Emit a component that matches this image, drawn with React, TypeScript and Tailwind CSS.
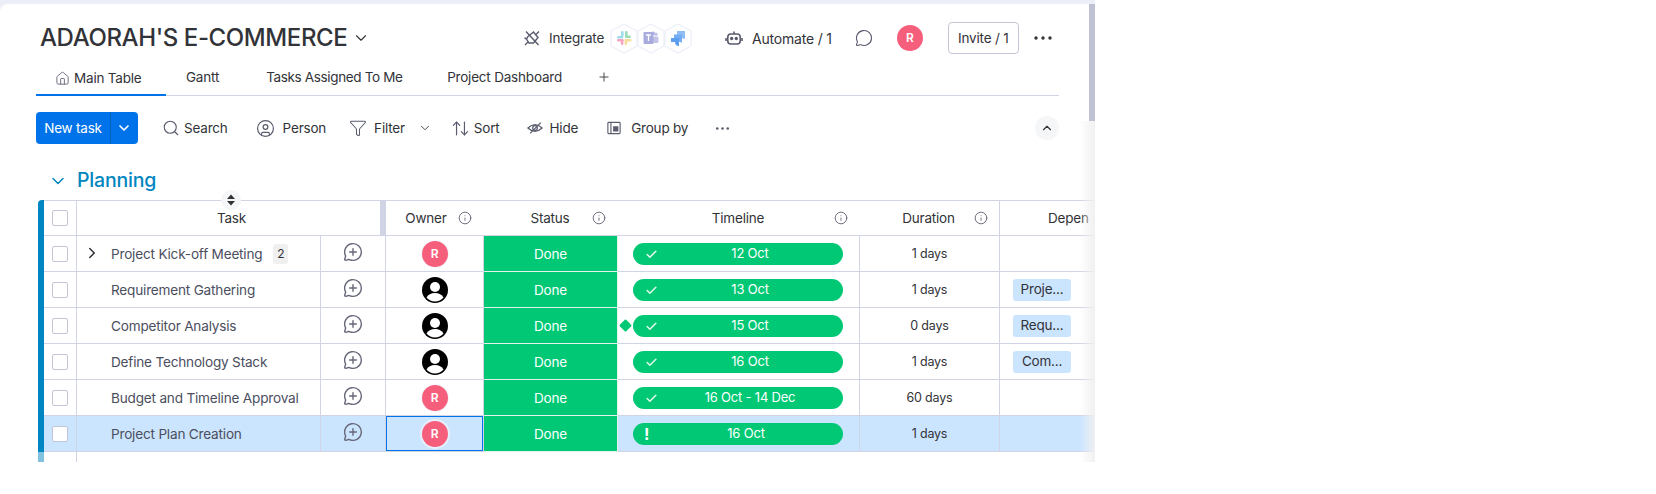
import {
  ArrowUpDown,
  Check,
  ChevronDown,
  ChevronRight,
  ChevronUp,
  CircleUser,
  Funnel,
  House,
  Info,
  MessageCircle,
  MessageCirclePlus,
  Plus,
  Search,
} from 'lucide-react';
import type { ReactNode } from 'react';

type Task = {
  name: string;
  owner: 'initial' | 'blank';
  timeline: string;
  duration: string;
  dependency?: string;
  subitems?: number;
  milestone?: boolean;
  selected?: boolean;
};

const tasks: Task[] = [
  { name: 'Project Kick-off Meeting', owner: 'initial', timeline: '12 Oct', duration: '1 days', subitems: 2 },
  { name: 'Requirement Gathering', owner: 'blank', timeline: '13 Oct', duration: '1 days', dependency: 'Proje...' },
  { name: 'Competitor Analysis', owner: 'blank', timeline: '15 Oct', duration: '0 days', dependency: 'Requ...', milestone: true },
  { name: 'Define Technology Stack', owner: 'blank', timeline: '16 Oct', duration: '1 days', dependency: 'Com...' },
  { name: 'Budget and Timeline Approval', owner: 'initial', timeline: '16 Oct - 14 Dec', duration: '60 days' },
  { name: 'Project Plan Creation', owner: 'initial', timeline: '16 Oct', duration: '1 days', selected: true },
];

function Dots({ className }: { className: string }) {
  return (
    <svg viewBox="0 0 18 4" className={className} fill="currentColor">
      <circle cx="2" cy="2" r="1.7" />
      <circle cx="9" cy="2" r="1.7" />
      <circle cx="16" cy="2" r="1.7" />
    </svg>
  );
}

function Hexagon({ children }: { children: ReactNode }) {
  return (
    <div className="relative -mr-[1px] h-[31px] w-[28px]">
      <svg viewBox="0 0 28 31" className="absolute inset-0 h-full w-full" fill="#fff" stroke="#eceff8" strokeWidth="1.2">
        <path d="M14 1 L27 8 V23 L14 30 L1 23 V8 Z" />
      </svg>
      <svg viewBox="0 0 16 16" className="absolute left-[6px] top-[7.5px] h-4 w-4">
        {children}
      </svg>
    </div>
  );
}

function IntegrationLogos() {
  return (
    <div className="ml-[6px] flex items-center">
      <Hexagon>
        <rect x="1" y="6" width="6" height="2.6" rx="1.3" fill="#9fdcef" />
        <rect x="5" y="1" width="2.6" height="6" rx="1.3" fill="#9fdcef" />
        <rect x="9" y="1" width="2.6" height="6.5" rx="1.3" fill="#9ddcb8" />
        <rect x="9" y="5.5" width="6" height="2.6" rx="1.3" fill="#9ddcb8" />
        <rect x="9" y="9" width="6.5" height="2.6" rx="1.3" fill="#f7dc9b" />
        <rect x="8.6" y="9" width="2.6" height="6" rx="1.3" fill="#f7dc9b" />
        <rect x="1" y="9" width="6.5" height="2.6" rx="1.3" fill="#f3a6bd" />
        <rect x="4.8" y="9" width="2.6" height="6" rx="1.3" fill="#f3a6bd" />
      </Hexagon>
      <Hexagon>
        <circle cx="13" cy="4.2" r="1.7" fill="#c3c3e8" />
        <circle cx="10" cy="3.5" r="2" fill="#b5b6e4" />
        <rect x="10" y="6.5" width="5.5" height="6.5" rx="1.5" fill="#c3c3e8" />
        <rect x="0.5" y="2" width="10" height="12" rx="1" fill="#a9abdf" />
        <path d="M3 5 H8 M5.5 5 V11" stroke="#fff" strokeWidth="1.3" fill="none" />
      </Hexagon>
      <Hexagon>
        <path d="M7 1 H15 V9 Q11 9 11 5 H7 Z" fill="#8fbdf5" />
        <path d="M4 4.5 H12 V12.5 Q8 12.5 8 8.5 H4 Z" fill="#74adf3" />
        <path d="M1 8 H9 V16 Q5 16 5 12 H1 Z" fill="#5c9ef0" />
      </Hexagon>
    </div>
  );
}

function ToolbarItem({ icon, label, className }: { icon: ReactNode; label: string; className: string }) {
  return (
    <div className={`flex w-fit items-center text-[13.5px] text-[#323338] ${className}`}>
      {icon}
      <span>{label}</span>
    </div>
  );
}

function HeaderLabel({ label, width, iconLeft }: { label: string; width: string; iconLeft: string }) {
  return (
    <div className={`relative flex h-full shrink-0 items-center justify-center ${width}`}>
      <span>{label}</span>
      <Info className={`absolute top-[10px] h-[14px] w-[14px] text-[#676879] ${iconLeft}`} strokeWidth={1.6} />
    </div>
  );
}

function Avatar({ owner, selected }: { owner: Task['owner']; selected?: boolean }) {
  if (owner === 'blank') {
    return (
      <svg viewBox="0 0 26 26" className="h-[26px] w-[26px]">
        <circle cx="13" cy="13" r="13" fill="#000" />
        <circle cx="13" cy="10" r="5" fill="#fff" />
        <path d="M4.5 20.5 Q7 16 13 16 Q19 16 21.5 20.5 Q18 24.4 13 24.4 Q8 24.4 4.5 20.5 Z" fill="#fff" />
      </svg>
    );
  }

  return (
    <div
      className={`flex h-[26px] w-[26px] items-center justify-center rounded-full bg-[#f65f7c] text-[12px] font-semibold text-white ${
        selected ? 'shadow-[0_0_0_2px_#e6f1fd]' : 'shadow-[0_0_0_1px_#f5f6f8]'
      }`}
    >
      R
    </div>
  );
}

function TaskRow({ task }: { task: Task }) {
  const lineClass = 'h-full shrink-0 border-b border-r border-[#d0d4e4]';

  return (
    <div className={`flex h-9 ${task.selected ? 'bg-[#cce5ff]' : 'bg-white'}`}>
      <div className={`${lineClass} flex w-[33px] items-center pl-[8px]`}>
        <div className="h-4 w-4 rounded-[2px] border border-[#c3c6d4] bg-white" />
      </div>
      <div className={`${lineClass} relative flex w-[244px] items-center pl-[34px] text-[13.6px] text-[#4b4e5e]`}>
        {task.subitems ? (
          <ChevronRight className="absolute left-[6px] top-[8px] h-[18px] w-[18px] text-[#323338]" strokeWidth={2} />
        ) : null}
        <span className="pt-[1px]">{task.name}</span>
        {task.subitems ? (
          <span className="ml-[11px] flex h-5 w-[15px] items-center justify-center rounded-[3px] bg-[#f0f0f0] text-[12px] text-[#323338]">
            {task.subitems}
          </span>
        ) : null}
      </div>
      <div className={`${lineClass} flex w-[65px] items-center justify-center pb-[3px]`}>
        <MessageCirclePlus className="h-[20px] w-[20px] text-[#676879]" strokeWidth={1.7} />
      </div>
      <div className={`${lineClass} flex w-[98px] items-center justify-center`}>
        {task.selected ? (
          <div className="flex h-[35px] w-[97px] items-center justify-center border border-[#0073ea]">
            <Avatar owner={task.owner} selected />
          </div>
        ) : (
          <Avatar owner={task.owner} />
        )}
      </div>
      <div className="flex h-full w-[134px] shrink-0 items-center justify-center border-b border-r border-[#e1f3ea] bg-[#00c875] pt-[1px] text-[13.5px] text-white">
        Done
      </div>
      <div className={`${lineClass} relative flex w-[242px] items-center pl-[15px]`}>
        {task.milestone ? (
          <div className="absolute left-[3px] top-[13px] h-[9px] w-[9px] rotate-45 rounded-[1px] bg-[#00c875]" />
        ) : null}
        <div className="relative flex h-[22px] w-[210px] items-center justify-center rounded-full bg-[#00c875] text-[13px] text-white">
          {task.selected ? (
            <span className="absolute left-[11px] top-[-1px] text-[16px] font-bold">!</span>
          ) : (
            <Check className="absolute left-[12px] top-[5px] h-[13px] w-[13px] text-[#dff7ea]" strokeWidth={3} />
          )}
          <span className={task.selected ? 'pl-[16px]' : 'pl-[24px]'}>{task.timeline}</span>
        </div>
      </div>
      <div className={`${lineClass} flex w-[140px] items-center justify-center pt-[1px] text-[12.5px] text-[#323338]`}>
        {task.duration}
      </div>
      <div className="flex h-full w-[200px] shrink-0 items-center border-b border-[#d0d4e4] pl-[13px]">
        {task.dependency ? (
          <span className="flex h-[22px] w-[58px] items-center justify-center rounded-[3px] bg-[#cce5ff] text-[13.5px] text-[#323338]">
            {task.dependency}
          </span>
        ) : null}
      </div>
    </div>
  );
}

export default function App() {
  return (
    <div className="relative h-[494px] w-[1656px] overflow-hidden bg-white font-['Inter','Noto_Sans',sans-serif] tracking-[-0.2px] text-[#323338]">
      <div className="relative h-[462px] w-[1095px] overflow-hidden bg-[#eceff8] pt-1">
        <div className="h-[458px] w-[1095px] overflow-hidden rounded-tl-lg bg-white pl-[36px] pt-[10px]">
          <div className="flex h-12 items-center">
            <h1 className="ml-[4px] w-[306px] whitespace-nowrap text-[24px] font-medium leading-none tracking-[-0.4px] text-[#323338]">
              ADAORAH&apos;S E-COMMERCE
            </h1>
            <ChevronDown className="ml-[6px] h-[18px] w-[18px] text-[#323338]" strokeWidth={1.5} />
            <svg viewBox="0 0 18 18" className="ml-[153px] h-[18px] w-[18px] text-[#5a5c6e]" fill="none" stroke="currentColor" strokeWidth="1.4">
              <path d="M5 7.5 L10.5 3 L15 8.5 L10.5 14 L6 14 L3.5 10 Z" />
              <path d="M3 2.5 L15.5 16 M13 5.5 L16 2.5 M5 13 L2 16 M1.5 9 L4 10" />
            </svg>
            <span className="ml-[8px] text-[13.5px]">Integrate</span>
            <IntegrationLogos />
            <svg viewBox="0 0 18 18" className="ml-[34px] h-[18px] w-[18px] text-[#5a5c6e]" fill="none" stroke="currentColor" strokeWidth="1.6">
              <rect x="2.8" y="5" width="12.4" height="10" rx="3" />
              <path d="M9 5 V2.5 M1 9 V12 M17 9 V12" />
              <circle cx="6.7" cy="9.5" r="0.9" fill="currentColor" />
              <circle cx="11.3" cy="9.5" r="0.9" fill="currentColor" />
            </svg>
            <span className="ml-[9px] text-[14px]">Automate / 1</span>
            <MessageCircle className="ml-[23px] h-[18px] w-[18px] text-[#5a5c6e]" strokeWidth={1.5} />
            <div className="ml-[24px] flex h-[26px] w-[26px] items-center justify-center rounded-full bg-[#f65f7c] text-[12px] font-semibold text-white">
              R
            </div>
            <div className="ml-[25px] flex h-8 w-[71px] items-center justify-center rounded-[4px] border border-[#c3c6d4] text-[13.5px]">
              Invite / 1
            </div>
            <Dots className="ml-[15px] h-1 w-[18px] text-[#323338]" />
          </div>

          <div className="flex h-[34px] w-[1023px] items-end border-b border-[#d0d4e4] text-[13.5px]">
            <div className="-mb-[1px] flex h-[33px] w-[130px] items-start border-b-2 border-[#0073ea] pl-[19px] pt-[5px]">
              <House className="mr-[4px] mt-[3px] h-[15px] w-[15px] text-[#676879]" strokeWidth={1.5} />
              <span>Main Table</span>
            </div>
            <div className="flex h-[33px] items-start pt-[5px]">
              <span className="ml-[20px]">Gantt</span>
              <span className="ml-[47px] w-[137px] whitespace-nowrap tracking-[-0.35px]">Tasks Assigned To Me</span>
              <span className="ml-[44px]">Project Dashboard</span>
              <Plus className="ml-[35px] mt-[3px] h-[14px] w-[14px]" strokeWidth={1.5} />
            </div>
          </div>

          <div className="mt-4 flex h-8 w-[1023px] items-center">
            <div className="flex h-8 w-[102px] items-center rounded-[4px] bg-[#0073ea] text-[13.5px] text-white">
              <span className="flex h-full w-[75px] items-center justify-center border-r border-[#0060b9]">New task</span>
              <ChevronDown className="ml-[5px] h-4 w-4" strokeWidth={2.5} />
            </div>
            <ToolbarItem
              className="ml-[24px]"
              label="Search"
              icon={<Search className="mr-[4px] h-[18px] w-[18px] text-[#5a5c6e]" strokeWidth={1.5} />}
            />
            <ToolbarItem
              className="ml-[28px]"
              label="Person"
              icon={<CircleUser className="mr-[8px] h-[19px] w-[19px] text-[#5a5c6e]" strokeWidth={1.5} />}
            />
            <ToolbarItem
              className="ml-[23px]"
              label="Filter"
              icon={<Funnel className="mr-[7px] h-[18px] w-[18px] text-[#5a5c6e]" strokeWidth={1.4} />}
            />
            <ChevronDown className="ml-[13px] h-[14px] w-[14px] text-[#323338]" strokeWidth={1.5} />
            <ToolbarItem
              className="ml-[19px]"
              label="Sort"
              icon={<ArrowUpDown className="mr-[4px] h-[19px] w-[19px] text-[#5a5c6e]" strokeWidth={1.5} />}
            />
            <ToolbarItem
              className="ml-[27px]"
              label="Hide"
              icon={
                <svg viewBox="0 0 18 18" className="mr-[7px] h-4 w-4 text-[#5a5c6e]" fill="none" stroke="currentColor" strokeWidth="1.4">
                  <path d="M1 9 Q9 1.5 17 9 Q9 16.5 1 9 Z" />
                  <circle cx="9" cy="9" r="2.6" />
                  <path d="M3.5 15 L15.5 3" />
                </svg>
              }
            />
            <ToolbarItem
              className="ml-[29px]"
              label="Group by"
              icon={
                <svg viewBox="0 0 16 16" className="mr-[10px] h-[14px] w-[14px] text-[#5a5c6e]" fill="none" stroke="currentColor" strokeWidth="1.3">
                  <rect x="1" y="1.5" width="14" height="13" rx="1" />
                  <path d="M4.5 1.5 V14.5" />
                  <rect x="7" y="6" width="6" height="6" fill="currentColor" stroke="none" />
                </svg>
              }
            />
            <Dots className="ml-[27px] h-[3px] w-[15px] text-[#5a5c6e]" />
            <div className="ml-auto flex h-6 w-6 items-center justify-center rounded-full bg-[#f5f6f8]">
              <ChevronUp className="h-[14px] w-[14px] text-[#323338]" strokeWidth={2} />
            </div>
          </div>

          <div className="mt-6 flex h-6 items-center text-[#0086c0]">
            <ChevronDown className="ml-[12px] mt-[1px] h-5 w-5" strokeWidth={1.8} />
            <span className="ml-[9px] pt-[2px] text-[19.5px] font-medium leading-none">Planning</span>
          </div>

          <div className="ml-[2px] mt-2 flex">
            <div className="flex w-[6px] shrink-0 flex-col">
              <div className="h-[252px] rounded-tl-[4px] bg-[#0086c0]" />
              <div className="h-[10px] bg-[#80c2df]" />
            </div>
            <div className="w-[1100px] shrink-0">
              <div className="relative flex h-9 border-y border-[#d0d4e4] text-[13.5px] text-[#323338]">
                <div className="flex h-full w-[33px] shrink-0 items-center border-r border-[#d0d4e4] pl-[8px]">
                  <div className="h-4 w-4 rounded-[2px] border border-[#c3c6d4] bg-white" />
                </div>
                <div className="flex h-full w-[309px] shrink-0 items-center justify-center border-r-[6px] border-r-[#d0d4e4] pl-[6px]">
                  Task
                </div>
                <HeaderLabel label="Owner" width="w-[98px] pr-[18px]" iconLeft="left-[72px]" />
                <HeaderLabel label="Status" width="w-[134px] pr-[2px]" iconLeft="left-[108px]" />
                <HeaderLabel label="Timeline" width="w-[242px] pr-[2px]" iconLeft="left-[216px]" />
                <HeaderLabel label="Duration" width="w-[140px] border-r border-[#d0d4e4] pr-[2px]" iconLeft="left-[114px]" />
                <div className="flex h-full items-center pl-[48px]">Depen</div>
                <div className="absolute -top-[11px] left-[177px] flex h-5 w-5 items-center justify-center rounded-full bg-[#f5f6f8]">
                  <svg viewBox="0 0 10 12" className="h-3 w-[10px] text-[#323338]" fill="currentColor">
                    <path d="M5 0.5 L9 5 H1 Z M5 11.5 L1 7 H9 Z" />
                  </svg>
                </div>
              </div>
              {tasks.map((task) => (
                <TaskRow key={task.name} task={task} />
              ))}
              <div className="h-[10px] w-[33px] border-r border-[#d0d4e4]" />
            </div>
          </div>
        </div>

        <div className="absolute right-0 top-1 h-[117px] w-[6px] bg-[#bfc2d3]" />
      </div>
      <div className="absolute left-[1080px] top-[121px] h-[341px] w-[15px] bg-gradient-to-r from-transparent to-[#f0f0f0]" />
    </div>
  );
}
